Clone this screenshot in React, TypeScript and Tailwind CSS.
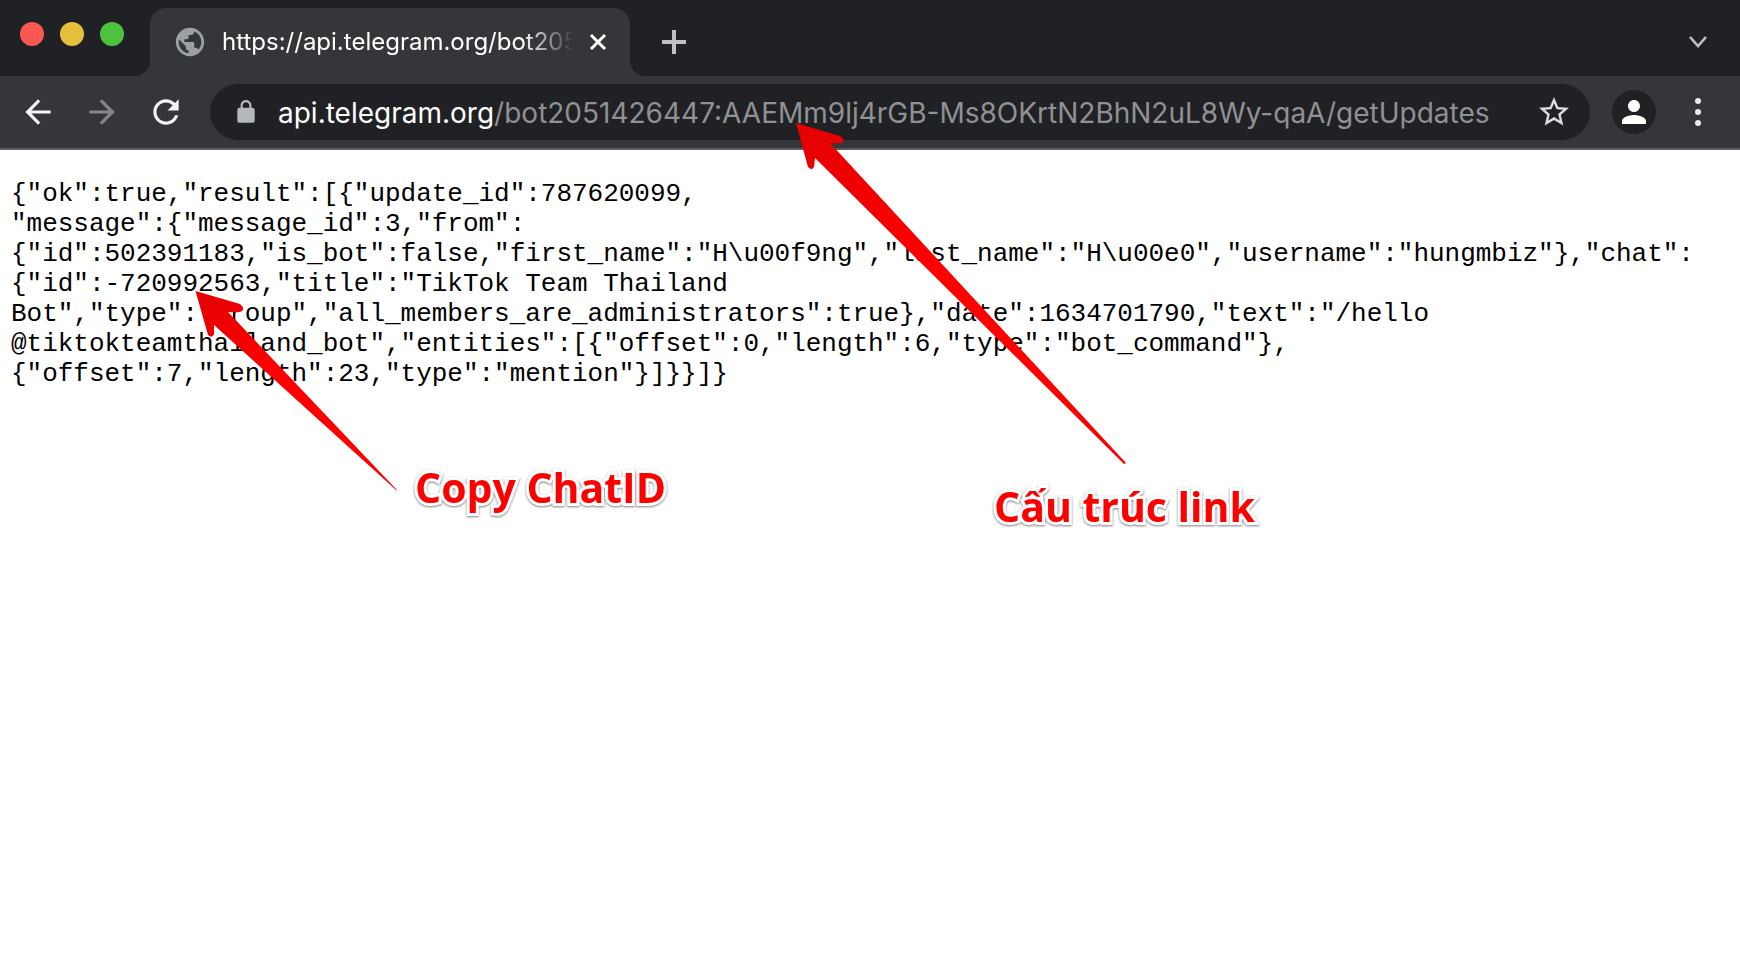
import React from 'react';

const jsonLines = [
  '{"ok":true,"result":[{"update_id":787620099,',
  '"message":{"message_id":3,"from":',
  '{"id":502391183,"is_bot":false,"first_name":"H\\u00f9ng","last_name":"H\\u00e0","username":"hungmbiz"},"chat":',
  '{"id":-720992563,"title":"TikTok Team Thailand',
  'Bot","type":"group","all_members_are_administrators":true},"date":1634701790,"text":"/hello',
  '@tiktokteamthailand_bot","entities":[{"offset":0,"length":6,"type":"bot_command"},',
  '{"offset":7,"length":23,"type":"mention"}]}}]}',
];

const Icon = ({ d, className }: { d: string; className: string }) => (
  <svg viewBox="0 0 24 24" fill="currentColor" className={className}>
    <path d={d} />
  </svg>
);

const BACK = 'M20 11H7.83l5.59-5.59L12 4l-8 8 8 8 1.41-1.41L7.83 13H20v-2z';
const FORWARD = 'M4 11h12.17l-5.59-5.59L12 4l8 8-8 8-1.41-1.41L16.17 13H4v-2z';
const RELOAD =
  'M17.65 6.35C16.2 4.9 14.21 4 12 4c-4.42 0-7.99 3.58-7.99 8s3.57 8 7.99 8c3.73 0 6.84-2.55 7.73-6h-2.08c-.82 2.33-3.04 4-5.65 4-3.31 0-6-2.69-6-6s2.69-6 6-6c1.66 0 3.14.69 4.22 1.78L13 11h7V4l-2.35 2.35z';
const STAR =
  'M22 9.24l-7.19-.62L12 2 9.19 8.63 2 9.24l5.46 4.73L5.82 21 12 17.27 18.18 21l-1.63-7.03L22 9.24zM12 15.4l-3.76 2.27 1-4.28-3.32-2.88 4.38-.38L12 6.1l1.71 4.04 4.38.38-3.32 2.88 1 4.28L12 15.4z';
const PERSON =
  'M12 12c2.21 0 4-1.79 4-4s-1.79-4-4-4-4 1.79-4 4 1.79 4 4 4zm0 2c-2.67 0-8 1.34-8 4v2h16v-2c0-2.66-5.33-4-8-4z';
const LOCK =
  'M18 8h-1V6c0-2.76-2.24-5-5-5S7 3.24 7 6v2H6c-1.1 0-2 .9-2 2v10c0 1.1.9 2 2 2h12c1.1 0 2-.9 2-2V10c0-1.1-.9-2-2-2zM9 6c0-1.66 1.34-3 3-3s3 1.34 3 3v2H9V6z';
const GLOBE =
  'M12 2C6.48 2 2 6.48 2 12s4.48 10 10 10 10-4.48 10-10S17.52 2 12 2zm-1 17.93c-3.95-.49-7-3.85-7-7.93 0-.62.08-1.21.21-1.79L9 15v1c0 1.1.9 2 2 2v1.93zm6.9-2.54c-.26-.81-1-1.39-1.9-1.39h-1v-3c0-.55-.45-1-1-1H8v-2h2c.55 0 1-.45 1-1V7h2c1.1 0 2-.9 2-2v-.41c2.93 1.19 5 4.06 5 7.41 0 2.08-.8 3.97-2.1 5.39z';

const Callout = ({ text, className }: { text: string; className: string }) => (
  <div
    className={`absolute font-['Open_Sans',sans-serif] font-bold text-[41px] leading-[54px] text-[#f00] whitespace-nowrap [-webkit-text-stroke:6px_#fff] [paint-order:stroke_fill] drop-shadow-[0_1px_1px_rgba(0,0,0,0.5)] ${className}`}
  >
    {text}
  </div>
);

export default function App() {
  return (
    <div className="relative h-[978px] w-full overflow-hidden bg-white">
      {/* tab strip */}
      <div className="flex h-[76px] bg-[#202124]">
        <div className="flex w-[150px] shrink-0 items-center gap-4 pb-[8px] pl-5">
          <div className="h-6 w-6 rounded-full bg-[#fc5753]" />
          <div className="h-6 w-6 rounded-full bg-[#e5bf3c]" />
          <div className="h-6 w-6 rounded-full bg-[#4fc23d]" />
        </div>
        <div className="relative mt-2 flex h-[68px] w-[480px] items-center rounded-t-[16px] bg-[#35363a] pl-[23px]">
          <div className="absolute bottom-0 left-[-16px] h-4 w-4 bg-[radial-gradient(circle_at_0_0,#202124_16px,#35363a_16.5px)]" />
          <div className="absolute bottom-0 right-[-16px] h-4 w-4 bg-[radial-gradient(circle_at_100%_0,#202124_16px,#35363a_16.5px)]" />
          <Icon d={GLOBE} className="h-[34px] w-[34px] shrink-0 text-[#9aa0a6]" />
          <div className="ml-[15px] w-[352px] overflow-hidden whitespace-nowrap font-['Inter',sans-serif] text-[24px] text-white [mask-image:linear-gradient(to_right,#000_300px,transparent_352px)]">
            https://api.telegram.org/bot2051426447
          </div>
          <svg viewBox="0 0 18 18" className="ml-[15px] h-[18px] w-[18px] shrink-0" stroke="#fff" strokeWidth="3">
            <path d="M2 2l14 14M16 2L2 16" />
          </svg>
        </div>
        <div className="ml-[28px] flex h-full items-center pt-2">
          <svg viewBox="0 0 32 32" className="h-8 w-8" stroke="#bdc1c6" strokeWidth="4">
            <path d="M16 4v24M4 16h24" />
          </svg>
        </div>
        <div className="ml-auto mr-[32px] flex h-full items-center pt-2">
          <svg viewBox="0 0 20 14" className="h-[14px] w-5" fill="none" stroke="#bdc1c6" strokeWidth="2.6">
            <path d="M2 2l8 9 8-9" />
          </svg>
        </div>
      </div>

      {/* toolbar */}
      <div className="flex h-[74px] items-center border-b-2 border-[#5c5d60] bg-[#35363a] pb-[1px]">
        <Icon d={BACK} className="ml-[19px] h-[38px] w-[38px] text-[#f1f3f4]" />
        <Icon d={FORWARD} className="ml-[26px] h-[38px] w-[38px] text-[#85878a]" />
        <Icon d={RELOAD} className="ml-[26px] h-[38px] w-[38px] text-[#f1f3f4]" />
        <div className="ml-[25px] flex h-14 w-[1380px] items-center rounded-full bg-[#202124] pl-[23px]">
          <Icon d={LOCK} className="h-[26px] w-[26px] text-[#b4b7bb]" />
          <div className="ml-[19px] whitespace-nowrap pt-[3px] font-['Inter',sans-serif] text-[28px] text-[#8f9194]">
            <span className="text-white">api.telegram.org</span>/bot2051426447:AAEMm9lj4rGB-Ms8OKrtN2BhN2uL8Wy-qaA/getUpdates
          </div>
          <Icon d={STAR} className="ml-auto mr-[18px] h-[36px] w-[36px] text-[#dadce0]" />
        </div>
        <div className="ml-[22px] flex h-11 w-11 items-center justify-center rounded-full bg-[#202124]">
          <Icon d={PERSON} className="h-[36px] w-[36px] text-white" />
        </div>
        <div className="ml-[39px] flex flex-col gap-[5px]">
          <div className="h-[6px] w-[6px] rounded-full bg-[#e8eaed]" />
          <div className="h-[6px] w-[6px] rounded-full bg-[#e8eaed]" />
          <div className="h-[6px] w-[6px] rounded-full bg-[#e8eaed]" />
        </div>
      </div>

      {/* response body */}
      <div className="px-[11px] pt-[29px] font-['Liberation_Mono',monospace] text-[26px] leading-[30px] tracking-[-0.02px] text-black">
        {jsonLines.map((line, i) => (
          <div key={i} className="whitespace-pre">
            {line}
          </div>
        ))}
      </div>

      {/* annotation arrows */}
      <svg className="absolute inset-0 h-full w-full" viewBox="0 0 1740 978">
        <defs>
          <linearGradient id="arrow-fill" x1="0" y1="0" x2="1" y2="1">
            <stop offset="0" stopColor="#e30000" />
            <stop offset="0.4" stopColor="#f00" />
          </linearGradient>
        </defs>
        <path
          d="M796 123L840 136Q845 139 843 142Q841 144 830 143L1126 463L1124 464L815 158L814 167Q812 171 808 167Z"
          fill="url(#arrow-fill)"
        />
        <path
          d="M195.500 291L240 304Q245 308 242 311Q240 313 228 312L397 490L396 490L214 325L214 334Q212 339 208 335Z"
          fill="url(#arrow-fill)"
        />
      </svg>

      <Callout text="Copy ChatID" className="left-[415px] top-[460px]" />
      <Callout text="Cấu trúc link" className="left-[994px] top-[479px]" />
    </div>
  );
}
